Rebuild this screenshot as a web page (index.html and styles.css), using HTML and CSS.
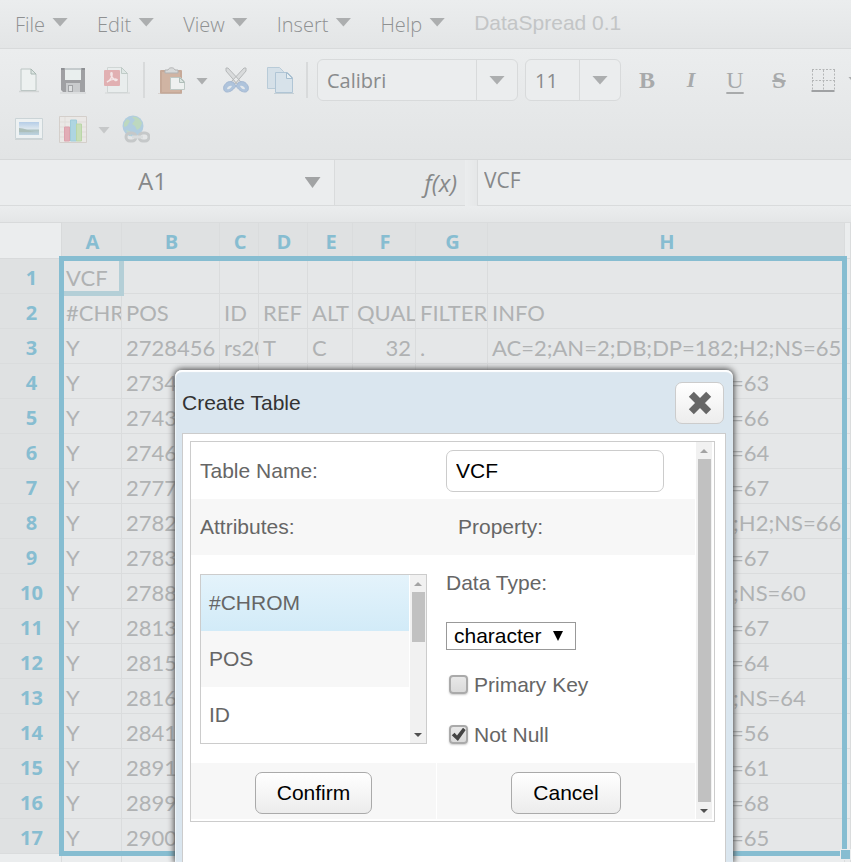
FILE: index.html
```html
<!DOCTYPE html>
<html lang="en">
<head>
<meta charset="utf-8">
<title>DataSpread 0.1</title>
<link rel="stylesheet" href="styles.css">
</head>
<body>
<nav class="menubar">
  <button class="menu">File<i class="caret"></i></button>
  <button class="menu">Edit<i class="caret"></i></button>
  <button class="menu">View<i class="caret"></i></button>
  <button class="menu">Insert<i class="caret"></i></button>
  <button class="menu">Help<i class="caret"></i></button>
  <span class="brand">DataSpread 0.1</span>
</nav>

<div class="toolbar">
  <div class="tools">
    <div class="group">
      <button class="tool" aria-label="New"><svg viewBox="0 0 28 28"><path d="M4 25.500h20" stroke="#d2d5d5" stroke-width="1.500"/><path d="M6 3h10l5 5v16.500h-15z" fill="#edf1f0" stroke="#bcc6c4"/><path d="M16 3v5h5z" fill="#dce5e2" stroke="#a9b8b3"/></svg></button>
      <button class="tool" aria-label="Save"><svg viewBox="0 0 28 28"><path d="M2 2h24v24H4l-2-2z" fill="#9fa0a3"/><path d="M2 2h3v2H2zM23 2h3v2h-3z" fill="#8e9094"/><path d="M6 2h16v12H6z" fill="#e9efee"/><path d="M6 2h16v2H6z" fill="#c5cbcd"/><path d="M7 17h14v9H7z" fill="#c9cbcd"/><path d="M9 19h5v7H9z" fill="#a1a3a6"/><path d="M10 20h3v5h-3z" fill="#dddfe0"/><path d="M1 27h26" stroke="#cfd1d2"/></svg></button>
      <button class="tool" aria-label="Export as PDF"><svg viewBox="0 0 28 28"><path d="M4.500 1.500h14l6 6v19h-20z" fill="#e9eded" stroke="#d0d6d5"/><path d="M18.500 1.500v6h6z" fill="#dfe7e5" stroke="#bfcbc7"/><path d="M2 27h25" stroke="#d3d6d6"/><rect x="1" y="4" width="16" height="16" rx="1" fill="#e1b0b2"/><path d="M4 16c3-1 6-6 5-9-1-1-2 1 0 4s4 4 5 3-4-2-10 2z" fill="none" stroke="#f3e6e7" stroke-width="1.500"/></svg></button>
    </div>
    <span class="sep"></span>
    <button class="tool paste" aria-label="Paste"><svg viewBox="0 0 28 28"><rect x="3" y="4" width="22" height="24" rx="1" fill="#c6a998"/><path d="M5 6h18v20H5z" fill="#d0b4a3"/><path d="M8 7V4h3c1-3 6-3 7 0h3v3z" fill="#d8dada" stroke="#b1b2b3"/><path d="M13.500 11.500h10l4 4v8h-14z" fill="#eef1f0" stroke="#bec9c5"/><path d="M22.500 11.500v5h5z" fill="#dce6e2" stroke="#b0beb9"/><path d="M1 28h24" stroke="#c8bcb7"/></svg></button>
    <i class="caret small"></i>
    <div class="group clip">
      <button class="tool" aria-label="Cut"><svg viewBox="0 0 28 28"><path d="M4 2l2 0 13 14-3 3L4 5zM24 2h-2L9 16l3 3L24 5z" fill="#d9dbdc" stroke="#b5b8b9"/><path d="M12 17c-4-3-8-1-10 3-1 3 0 6 3 6 4 0 7-3 9-6zM16 17c4-3 8-1 10 3 1 3 0 6-3 6-4 0-7-3-9-6z" fill="#afc4dc" stroke="#a5b9d3"/><path d="M10 20c-2-1-5 1-5 3 2 1 4-1 5-3zM18 20c2-1 5 1 5 3-2 1-4-1-5-3z" fill="#e4e8eb"/></svg></button>
      <button class="tool" aria-label="Copy"><svg viewBox="0 0 28 28"><path d="M1.500 1.500h12l4 4v17h-16z" fill="#d5e0e8" stroke="#b8cbd8"/><path d="M9.500 6.500h12l5 5v15h-17z" fill="#d7e2ea" stroke="#b0c5d5"/><path d="M20.500 6.500v6h6z" fill="#e7eef1" stroke="#a5bdcf"/><path d="M8 27.500h20" stroke="#c5d0d6"/></svg></button>
    </div>
    <span class="sep tight"></span>
    <label class="combo family"><select aria-label="Font family"><option>Calibri</option></select><span class="drop"><i class="caret"></i></span></label>
    <label class="combo size"><select aria-label="Font size"><option>11</option></select><span class="drop"><i class="caret"></i></span></label>
    <div class="group format">
      <button class="tool letter bold">B</button>
      <button class="tool letter italic">I</button>
      <button class="tool letter under">U</button>
      <button class="tool letter strike">S</button>
      <button class="tool" aria-label="Borders"><svg viewBox="0 0 28 28"><path d="M3 3.500h23M3 14.500h23M3.500 4v20M14.500 4v20M25.500 4v20" fill="none" stroke="#b4b6b7" stroke-dasharray="2 1.500"/><path d="M2.500 25h23" stroke="#9fa1a3" stroke-width="2"/></svg></button>
      <i class="caret small"></i>
    </div>
  </div>
  <div class="tools">
    <div class="group">
      <button class="tool" aria-label="Insert picture"><svg viewBox="0 0 28 28"><defs><linearGradient id="sky" x2="0" y2="1"><stop offset="0" stop-color="#b5cde7"/><stop offset=".5" stop-color="#dbe6ee"/><stop offset=".65" stop-color="#b0c4c4"/><stop offset="1" stop-color="#bdd3e2"/></linearGradient></defs><path d="M.5 3.500h27v20H.5z" fill="#edf1f2" stroke="#cbd4d7"/><path d="M4 7h20v13H4z" fill="url(#sky)"/><path d="M4 13c5 0 10 3 16 4H4z" fill="#adbfba"/><path d="M0 24.500h28" stroke="#cfd4d5"/></svg></button>
      <button class="tool" aria-label="Insert chart"><svg viewBox="0 0 28 28"><path d="M.5 1.500h27v26H.5z" fill="#eae8e6" stroke="#d4cfcb"/><path d="M1 7h26M1 12h26M1 17h26M1 22h26M6 2v25" stroke="#e0dcd9"/><path d="M5.500 12h5v14h-5z" fill="#e2adb6" stroke="#dca2ad"/><path d="M11.500 5h6v21h-6z" fill="#aed5e1" stroke="#a0ccd9"/><path d="M17.500 9h5v17h-5z" fill="#c7deb8" stroke="#bad6a7"/></svg></button>
    </div>
    <i class="caret small light"></i>
    <button class="tool link" aria-label="Insert link"><svg viewBox="0 0 28 28"><circle cx="11" cy="11" r="10.500" fill="#b1cddf"/><path d="M10 2c5-1 8 2 10 6l-2 5-3 2-2-4-3-2 3-4zM2 8l3-4 3 2-3 5-3 1z" fill="#bdd8bf"/><path d="M4 15l4 1 1 5c-3-1-4-3-5-6z" fill="#bcd7cb"/><g fill="none" stroke="#c5c8c9" stroke-width="3"><rect x="4" y="18" width="10" height="8" rx="4"/><rect x="17" y="18" width="10" height="8" rx="4"/></g><path d="M10 22h11" stroke="#d9dcdd" stroke-width="3"/></svg></button>
  </div>
</div>

<div class="formulabar">
  <div class="namebox"><input type="text" value="A1" aria-label="Cell reference"><button aria-label="Named ranges"><i class="caret dark"></i></button></div>
  <div class="fx">f(x)</div>
  <div class="splitter"></div>
  <input class="formula" type="text" value="VCF" aria-label="Formula">
</div>

<main class="sheet">
  <table class="grid">
    <colgroup><col class="ch"><col class="ca"><col class="cb"><col class="cc"><col class="cd"><col class="ce"><col class="cf"><col class="cg"><col class="cx"><col></colgroup>
    <thead><tr><th class="corner"></th><th>A</th><th>B</th><th>C</th><th>D</th><th>E</th><th>F</th><th>G</th><th>H</th><th class="out"></th></tr></thead>
    <tbody>
      <tr><th>1</th><td>VCF</td><td></td><td></td><td></td><td></td><td></td><td></td><td></td><td></td></tr>
      <tr><th>2</th><td>#CHROM</td><td>POS</td><td>ID</td><td>REF</td><td>ALT</td><td>QUAL</td><td>FILTER</td><td>INFO</td><td></td></tr>
      <tr><th>3</th><td>Y</td><td>2728456</td><td>rs20</td><td>T</td><td>C</td><td class="num">32</td><td>.</td><td>AC=2;AN=2;DB;DP=182;H2;NS=65</td><td></td></tr>
      <tr><th>4</th><td>Y</td><td>2734</td><td></td><td></td><td></td><td></td><td></td><td>AC=1;AN=2;DP=196;NS=63</td><td></td></tr>
      <tr><th>5</th><td>Y</td><td>2743</td><td></td><td></td><td></td><td></td><td></td><td>AC=1;AN=2;DP=196;NS=66</td><td></td></tr>
      <tr><th>6</th><td>Y</td><td>2746</td><td></td><td></td><td></td><td></td><td></td><td>AC=1;AN=2;DP=196;NS=64</td><td></td></tr>
      <tr><th>7</th><td>Y</td><td>2777</td><td></td><td></td><td></td><td></td><td></td><td>AC=1;AN=2;DP=196;NS=67</td><td></td></tr>
      <tr><th>8</th><td>Y</td><td>2782</td><td></td><td></td><td></td><td></td><td></td><td>AC=2;AN=2;DB;DP=182;H2;NS=66</td><td></td></tr>
      <tr><th>9</th><td>Y</td><td>2783</td><td></td><td></td><td></td><td></td><td></td><td>AC=1;AN=2;DP=196;NS=67</td><td></td></tr>
      <tr><th>10</th><td>Y</td><td>2788</td><td></td><td></td><td></td><td></td><td></td><td>AC=1;AN=2;DB;DP=196;NS=60</td><td></td></tr>
      <tr><th>11</th><td>Y</td><td>2813</td><td></td><td></td><td></td><td></td><td></td><td>AC=1;AN=2;DP=196;NS=67</td><td></td></tr>
      <tr><th>12</th><td>Y</td><td>2815</td><td></td><td></td><td></td><td></td><td></td><td>AC=1;AN=2;DP=196;NS=64</td><td></td></tr>
      <tr><th>13</th><td>Y</td><td>2816</td><td></td><td></td><td></td><td></td><td></td><td>AC=1;AN=2;DB;DP=196;NS=64</td><td></td></tr>
      <tr><th>14</th><td>Y</td><td>2841</td><td></td><td></td><td></td><td></td><td></td><td>AC=1;AN=2;DP=196;NS=56</td><td></td></tr>
      <tr><th>15</th><td>Y</td><td>2891</td><td></td><td></td><td></td><td></td><td></td><td>AC=1;AN=2;DP=196;NS=61</td><td></td></tr>
      <tr><th>16</th><td>Y</td><td>2899</td><td></td><td></td><td></td><td></td><td></td><td>AC=1;AN=2;DP=196;NS=68</td><td></td></tr>
      <tr><th>17</th><td>Y</td><td>2900</td><td></td><td></td><td></td><td></td><td></td><td>AC=1;AN=2;DP=196;NS=65</td><td></td></tr>
      <tr class="beyond"><th></th><td></td><td></td><td></td><td></td><td></td><td></td><td></td><td></td><td></td></tr>
    </tbody>
  </table>
  <div class="active-cell"></div>
  <div class="selection"><span class="handle"></span></div>
</main>

<section class="dialog" role="dialog" aria-labelledby="dialog-title">
  <header class="dialog-head">
    <h1 id="dialog-title">Create Table</h1>
    <button class="close" aria-label="Close"><svg viewBox="0 0 24 24"><path d="M4 4l16 16M20 4L4 20" stroke="#666" stroke-width="6.500"/></svg></button>
  </header>
  <div class="dialog-body">
    <form class="frame">
      <div class="form">
        <div class="row"><label for="table-name">Table Name:</label><input id="table-name" class="text" type="text" value="VCF"></div>
        <div class="row shaded"><span id="attrs">Attributes:</span><span class="prop">Property:</span></div>
        <div class="row main">
          <div class="listbox">
            <ul role="listbox" aria-labelledby="attrs">
              <li role="option" aria-selected="true">#CHROM</li>
              <li role="option">POS</li>
              <li role="option">ID</li>
            </ul>
            <div class="scroll"><i class="up"></i><span class="thumb short"></span><i class="down"></i></div>
          </div>
          <div class="props">
            <label for="data-type">Data Type:</label>
            <span class="picker"><select id="data-type"><option>character</option></select><svg viewBox="0 0 10 10"><path d="M0 0h10L5 10z"/></svg></span>
            <label class="check"><input type="checkbox">Primary Key</label>
            <label class="check"><input type="checkbox" checked>Not Null</label>
          </div>
        </div>
        <div class="actions">
          <div><button type="button" class="btn">Confirm</button></div>
          <div><button type="button" class="btn">Cancel</button></div>
        </div>
      </div>
      <div class="scroll outer"><i class="up"></i><span class="thumb"></span><i class="down"></i></div>
    </form>
  </div>
</section>
</body>
</html>
```
FILE: styles.css
```css
* { box-sizing: border-box; }
body {
  margin: 0;
  height: 100vh;
  overflow: hidden;
  position: relative;
  display: flex;
  flex-direction: column;
  background: #ebedee;
  font-family: "Liberation Sans", Arial, sans-serif;
  font-size: 21px;
}
button, input, select { font: inherit; color: inherit; margin: 0; padding: 0; border: 0; background: none; }

.caret {
  flex: none;
  width: 16px;
  height: 9px;
  background: #acaeaf;
  clip-path: polygon(0 0, 100% 0, 50% 100%);
}
.caret.small { width: 12px; height: 7px; }
.caret.light { background: #c6c8c9; }
.caret.dark { background: #a1a3a4; height: 11px; }

.menubar {
  flex: none;
  display: flex;
  align-items: center;
  gap: 29px;
  height: 49px;
  padding-left: 15px;
  border-bottom: 1px solid #d8dadb;
  background: linear-gradient(#ebedee, #e3e5e6);
}
.menu {
  display: flex;
  align-items: center;
  gap: 7px;
  font-family: "Open Sans", sans-serif;
  font-size: 20px;
  font-weight: 300;
  color: #8f9192;
}
.menu .caret { margin-bottom: 4px; }
.brand { color: #c3c5c6; padding-bottom: 3px; }

.toolbar {
  flex: none;
  height: 111px;
  padding-top: 10px;
  border-bottom: 1px solid #d6d8d9;
  background: linear-gradient(#ebedee, #e2e4e5);
}
.tools { display: flex; align-items: center; height: 42px; padding-left: 15px; overflow: hidden; }
.tools + .tools { height: 56px; }
.group { display: flex; align-items: center; gap: 16px; flex: none; }
.tool { flex: none; width: 28px; height: 28px; }
.tool svg { display: block; width: 28px; height: 28px; }
.tools > .caret { margin: 2px 12px 0 11px; }
.sep { flex: none; width: 2px; height: 36px; margin: 0 12px; background: #d8dadb; }
.clip { padding-left: 2px; }
.sep.tight { margin-right: 9px; }
.combo {
  flex: none;
  display: flex;
  height: 42px;
  margin-right: 7px;
  border: 1px solid #d8dadb;
  border-radius: 6px;
  background: #ebedee;
  font-family: "Open Sans", sans-serif;
  font-size: 20px;
  color: #898b8c;
}
.combo.family { width: 201px; }
.combo.size { width: 96px; }
.combo select { flex: 1; min-width: 0; padding-left: 9px; appearance: none; }
.drop { width: 41px; border-left: 1px solid #d8dadb; display: flex; align-items: center; justify-content: center; }
.format { padding-left: 5px; }
.format .caret { margin-left: -5px; }
.letter { font-family: "Liberation Serif", serif; font-size: 22px; font-weight: bold; line-height: 28px; color: #a8aaab; }
.letter.bold { font-size: 24px; }
.letter.italic { font-style: italic; }
.letter.under { font-weight: normal; font-size: 24px; line-height: 24px; text-decoration: underline 2px; text-underline-offset: 4px; }
.letter.strike { font-size: 24px; text-decoration: line-through 2px; }

.formulabar { flex: none; display: flex; height: 46px; font-family: "Open Sans", sans-serif; color: #868889; }
.namebox { flex: none; width: 335px; display: flex; border: solid #d9dbdc; border-width: 0 1px 1px 0; }
.namebox input { flex: 1; min-width: 0; padding: 0 0 4px 14px; text-align: center; font-size: 24px; }
.namebox button { width: 43px; display: flex; align-items: center; justify-content: center; }
.fx { flex: none; width: 130px; padding: 3px 8px 0 0; text-align: right; font-size: 24px; line-height: 40px; font-style: italic; background: #e7e9ea; border-bottom: 1px solid #d9dbdc; }
.splitter { flex: none; width: 12px; background: linear-gradient(90deg, #ebedee, #e5e7e8); }
.formula { flex: 1; min-width: 0; padding: 0 0 6px 6px; font-size: 21px; border: solid #d9dbdc; border-width: 0 0 1px 1px; }

.gap { flex: none; }
.sheet { flex: 1; min-height: 0; position: relative; padding-top: 16px; overflow: hidden; font-family: "Lato", sans-serif; background: linear-gradient(#ebedee, #e4e6e7 16px); }
.grid { width: 100%; table-layout: fixed; border-collapse: separate; border-spacing: 0; }
.ch { width: 62px; }
.ca { width: 60px; }
.cb { width: 98px; }
.cc { width: 39px; }
.cd { width: 49px; }
.ce { width: 45px; }
.cf { width: 63px; }
.cg { width: 72px; }
.cx { width: 357px; }
.grid th, .grid td { padding: 0; overflow: hidden; white-space: nowrap; border: solid #dadcdd; border-width: 0 1px 1px 0; }
.grid th { padding: 2px 0 0 2px; font-family: "Open Sans", sans-serif; font-size: 20px; font-weight: 700; color: #87bdd1; background: #dfe1e2; line-height: 32px; }
.grid tbody th { padding-top: 4px; line-height: 30px; }
.grid thead th { height: 37px; border-top-width: 1px; }
.grid .corner { background: #ebedee; border-color: #d8dadb; }
.grid .out { background: #ebedee; }
.grid tbody tr { height: 35px; }
.grid td { padding: 4px 0 0 4px; line-height: 30px; font-size: 22px; color: #b0b2b3; background: #e5e7e8; }
.grid td:last-child { background: #e9ebec; }
.grid .num { text-align: right; padding-right: 4px; }
.grid .beyond > * { background: #ebedee; }

.selection { position: absolute; left: 59px; top: 50px; width: 788px; height: 600px; border: 5px solid #86bdd1; }
.handle { position: absolute; right: -9px; bottom: -9px; width: 11px; height: 11px; background: #86bdd1; border: 1px solid #ebedee; }
.active-cell { position: absolute; left: 62px; top: 53px; width: 62px; height: 37px; border: solid #b4cfd7; border-width: 0 5px 5px 0; }

.dialog {
  position: absolute;
  left: 175px;
  top: 370px;
  bottom: 0;
  width: 558px;
  display: flex;
  flex-direction: column;
  padding: 0 7px;
  border-radius: 7px 7px 0 0;
  background: #dae6ef;
  box-shadow: 0 0 6px 1px #444, inset 0 2px 1px #fff, inset 1px 0 1px #eef5fa;
  color: #666;
}
.dialog-head { flex: none; display: flex; align-items: center; justify-content: space-between; height: 63px; padding: 3px 2px 0 0; }
.dialog-head h1 { margin: 0; font-size: 21px; font-weight: normal; color: #333; }
.close {
  display: flex;
  align-items: center;
  justify-content: center;
  width: 49px;
  height: 42px;
  border: 1px solid #ccc;
  border-radius: 7px;
  background: linear-gradient(#fff, #ededed);
}
.close svg { width: 26px; height: 26px; }
.dialog-body { flex: 1; padding: 7px 10px 0 7px; border: solid #ccc; border-width: 1px 1px 0; background: #fff; }
.frame { display: flex; gap: 1px; padding-right: 2px; border: 1px solid #ccc; }
.form { flex: 1; padding-bottom: 2px; }
.row { display: grid; grid-template-columns: 246px 1fr; align-items: center; min-height: 56px; padding: 0 9px; }
.row:first-child { min-height: 57px; }
.shaded { background: #f7f7f7; }
.prop { padding-left: 12px; }
.text { width: 218px; height: 42px; padding: 0 9px; border: 1px solid #ccc; border-radius: 7px; color: #000; background: #fff; }
.main { align-items: start; height: 208px; padding-top: 19px; }
.listbox { display: flex; gap: 1px; width: 227px; border: 1px solid #ccc; }
.listbox ul { flex: 1; margin: 0; padding: 0; list-style: none; }
.listbox li { height: 56px; padding-left: 8px; line-height: 56px; }
.listbox li:nth-child(2) { background: #f7f7f7; }
.listbox li[aria-selected] { background: linear-gradient(#e4f3fb, #d2ebf8); }
.scroll { width: 16px; display: flex; flex-direction: column; align-items: center; background: #f1f1f1; }
.scroll i { flex: none; width: 8px; height: 4px; margin: 7px 0 6px; background: #a3a3a3; clip-path: polygon(50% 0, 100% 100%, 0 100%); }
.scroll .down { margin-top: auto; background: #505050; clip-path: polygon(0 0, 100% 0, 50% 100%); }
.thumb { flex: 1; width: 13px; background: #c1c1c1; }
.thumb.short { flex: none; height: 50px; }
.outer { margin-bottom: 2px; }
.outer .down { margin-top: 7px; }
.props { display: flex; flex-direction: column; align-items: flex-start; line-height: 24px; margin-top: -3px; }
.picker { position: relative; width: 130px; height: 28px; margin: 27px 0 22px; }
.picker select { width: 100%; height: 28px; padding-left: 7px; appearance: none; border: 1px solid #999; background: #fff; color: #000; }
.picker svg { position: absolute; right: 13px; top: 9px; width: 10px; height: 10px; pointer-events: none; }
.check { display: flex; align-items: center; gap: 6px; height: 26px; margin-bottom: 24px; }
.check input {
  appearance: none;
  width: 19px;
  height: 19px;
  margin: 0 0 2px 3px;
  border: 2px solid #aaa;
  border-radius: 4px;
  background: linear-gradient(#e8e8e8, #dadada);
  box-shadow: 0 1px 2px #ccc;
}
.check input:checked::before {
  content: "";
  display: block;
  height: 15px;
  background: #444;
  clip-path: polygon(5% 58%, 24% 42%, 40% 60%, 80% 8%, 98% 24%, 46% 96%);
}
.actions { display: grid; grid-template-columns: 245px 1fr; gap: 1px; }
.actions div { display: flex; align-items: center; justify-content: center; height: 56px; padding: 3px 0 0; background: #f7f7f7; }
.btn { height: 42px; padding: 0 21px; border: 1px solid #aaa; border-radius: 7px; background: linear-gradient(#fff, #ececec); color: #000; }
```
